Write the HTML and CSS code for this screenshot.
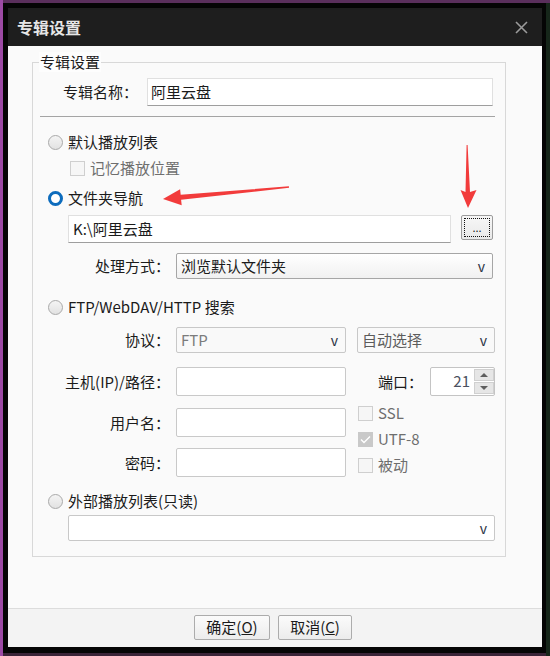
FILE: index.html
```html
<!DOCTYPE html>
<html lang="zh-CN">
<head>
  <meta charset="utf-8"/>
  <title>专辑设置</title>
  <link rel="stylesheet" href="styles.css">
</head>
<body>

<div class="dialog">
  <div class="titlebar">
    <span class="title">专辑设置</span>
    <svg class="close" width="13" height="13" viewBox="0 0 13 13">
      <path d="M1 1 L12 12 M12 1 L1 12" stroke="#9b9b9b" stroke-width="1.6" fill="none"/>
    </svg>
  </div>

  <div class="content">
    <div class="group">
      <span class="group-title">专辑设置</span>

      <div class="row row-name">
        <span class="lbl lbl-name">专辑名称：</span>
        <div class="edit edit-name">阿里云盘</div>
      </div>
      <div class="sep"></div>

      <div class="opt opt-first"><span class="radio"></span>默认播放列表</div>
      <div class="opt opt-sub"><span class="check"></span>记忆播放位置</div>
      <div class="opt opt-folder"><span class="radio on"></span>文件夹导航</div>

      <div class="row row-path">
        <div class="edit edit-path">K:\阿里云盘</div>
        <div class="btn-browse"><span>...</span></div>
      </div>

      <div class="row row-mode">
        <span class="lbl">处理方式：</span>
        <div class="combo combo-mode">浏览默认文件夹<span class="caret">v</span></div>
      </div>

      <div class="opt opt-ftp"><span class="radio"></span>FTP/WebDAV/HTTP 搜索</div>

      <div class="row row-proto">
        <span class="lbl">协议：</span>
        <div class="combo combo-proto off">FTP<span class="caret">v</span></div>
        <div class="combo combo-enc">自动选择<span class="caret">v</span></div>
      </div>

      <div class="lower">
        <div class="col-left">
          <div class="row row-field">
            <span class="lbl">主机(IP)/路径：</span>
            <div class="edit edit-small"></div>
          </div>
          <div class="row row-field row-user">
            <span class="lbl">用户名：</span>
            <div class="edit edit-small"></div>
          </div>
          <div class="row row-field row-pass">
            <span class="lbl">密码：</span>
            <div class="edit edit-small"></div>
          </div>
        </div>
        <div class="col-right">
          <div class="row row-port">
            <span class="lbl-port">端口：</span>
            <div class="spin">
              <span class="spin-val">21</span>
              <div class="spin-btns">
                <span class="spin-up"></span>
                <span class="spin-down"></span>
              </div>
            </div>
          </div>
          <div class="opt opt-flag first"><span class="check"></span>SSL</div>
          <div class="opt opt-flag"><span class="check checked"><svg width="11" height="9" viewBox="0 0 11 9"><path d="M1 4.5 L4 7.5 L10 1.5" stroke="#fff" stroke-width="1.4" fill="none"/></svg></span>UTF-8</div>
          <div class="opt opt-flag"><span class="check"></span>被动</div>
        </div>
      </div>

      <div class="opt opt-ext"><span class="radio"></span>外部播放列表(只读)</div>
      <div class="combo combo-ext"><span class="caret">v</span></div>
    </div>
  </div>

  <div class="footer">
    <div class="btn btn-ok">确定(<u>O</u>)</div>
    <div class="btn btn-cancel">取消(<u>C</u>)</div>
  </div>

  <!-- red hint arrows drawn on top of the dialog -->
  <svg class="arrows" width="534" height="639" viewBox="0 0 534 639">
    <polygon fill="#f23b3b" points="155,191 172.1,181.3 172.7,186.8 280.9,178.3 281.1,179.7 173.1,191.8 173.7,197.3"/>
    <polygon fill="#f23b3b" points="458.6,137 459.6,137 462,184 468.5,182 460,200 452.5,182 457.5,184"/>
  </svg>
</div>

</body>
</html>
```

FILE: styles.css
```css
body {
  margin: 0;
  height: 656px;
  padding: 8px;
  box-sizing: border-box;
  overflow: hidden;
  font-family: "Noto Sans CJK SC", "Noto Sans", sans-serif;
  font-size: 15px;
  color: #1b1b1b;
  background:
    linear-gradient(90deg, #9c4aa4 0, #9c4aa4 3px, transparent 3px),
    linear-gradient(180deg, #5a2f5c 0, #5a2f5c 3px, transparent 3px),
    linear-gradient(270deg, #16261a 0, #16261a 4px, transparent 4px),
    linear-gradient(0deg, #3a2438 0, #3a2438 3px, transparent 3px),
    #050505;
}
.dialog {
  position: relative;
  width: 534px;
  height: 639px;
  background: #fafafa;
}
.titlebar {
  height: 38px;
  background: #1e1e1e;
  display: flex;
  align-items: center;
  justify-content: space-between;
  padding: 0 14px 0 9px;
}
.title {
  color: #e6e6e6;
  font-size: 16px;
  font-weight: bold;
  line-height: 20px;
}
.content {
  height: 562px;
  padding-top: 16px;
  box-sizing: border-box;
}
.group {
  position: relative;
  margin-left: 24px;
  width: 474px;
  box-sizing: border-box;
  border: 1px solid #d8d8d8;
  padding-bottom: 15px;
}
.group-title {
  position: absolute;
  left: 6px;
  top: -11px;
  padding: 0 1px;
  background: #fdfdfd;
  line-height: 20px;
}
.row {
  display: flex;
  align-items: center;
}
.lbl {
  width: 137px;
  text-align: right;
  flex: none;
  line-height: 20px;
}
.row-name {
  margin-top: 15px;
  gap: 9px;
}
.lbl-name {
  width: 105px;
}
.edit {
  background: #fff;
  border: 1px solid #e0e0e0;
  border-bottom-color: #9e9e9e;
  box-sizing: border-box;
  height: 28px;
  line-height: 26px;
  padding-left: 3px;
  flex: none;
}
.edit-name {
  width: 346px;
}
.sep {
  margin: 10px 0 0 7px;
  width: 455px;
  height: 1px;
  background: #a4a4a4;
}
.opt {
  display: flex;
  align-items: center;
  gap: 5px;
  height: 20px;
  line-height: 20px;
  padding-left: 15px;
}
.opt-first {
  margin-top: 15px;
}
.opt-sub {
  margin-top: 6px;
  padding-left: 37px;
  color: #6e6e6e;
}
.opt-folder {
  margin-top: 10px;
}
.opt-ftp {
  margin-top: 18px;
}
.opt-ext {
  margin-top: 14px;
}
.radio {
  width: 15px;
  height: 15px;
  border-radius: 50%;
  box-sizing: border-box;
  border: 1px solid #a9a9a9;
  background: linear-gradient(#f4f4f4, #e2e2e2);
  flex: none;
}
.radio.on {
  border: 3px solid #0d6cbd;
  background: #fff;
}
.check {
  width: 15px;
  height: 15px;
  box-sizing: border-box;
  border: 1px solid #cfcfcf;
  background: #f6f6f6;
  flex: none;
  display: flex;
  align-items: center;
  justify-content: center;
}
.check.checked {
  background: #c9c9c9;
  border-color: #c9c9c9;
}
.row-path {
  margin-top: 7px;
  padding-left: 35px;
  gap: 10px;
  align-items: flex-start;
}
.edit-path {
  width: 383px;
  padding-left: 4px;
}
.btn-browse {
  width: 32px;
  height: 25px;
  box-sizing: border-box;
  border: 1px solid #9c9c9c;
  border-radius: 2px;
  background: linear-gradient(#f7f7f7, #e9e9e9);
  padding: 2px;
}
.btn-browse span {
  display: block;
  height: 100%;
  box-sizing: border-box;
  border: 1px dotted #111;
  text-align: center;
  font-size: 11px;
  line-height: 17px;
}
.combo {
  position: relative;
  height: 26px;
  box-sizing: border-box;
  border: 1px solid #c8c8c8;
  border-radius: 2px;
  background: #f9f9f9;
  line-height: 24px;
  padding-left: 4px;
  color: #5c5c5c;
  flex: none;
}
.caret {
  position: absolute;
  right: 7px;
  top: 0;
  color: #2c3446;
  font-size: 14px;
}
.row-mode {
  margin-top: 10px;
  gap: 6px;
}
.combo-mode {
  width: 317px;
  border-color: #a6a6a6;
  background: linear-gradient(#ffffff, #f1f1f1);
  color: #1b1b1b;
}
.row-proto {
  margin-top: 10px;
  gap: 6px;
}
.combo-proto {
  width: 170px;
  color: #7c7c7c;
}
.combo-enc {
  width: 138px;
  margin-left: 5px;
}
.lower {
  display: flex;
  margin-top: 14px;
}
.col-left {
  width: 313px;
}
.col-right {
  margin-left: 12px;
}
.row-field {
  gap: 6px;
}
.row-user {
  margin-top: 12px;
}
.row-pass {
  margin-top: 11px;
}
.edit-small {
  width: 170px;
  height: 29px;
  border-color: #c9c9c9;
  border-radius: 2px;
}
.row-port {
  height: 29px;
  gap: 7px;
}
.lbl-port {
  padding-left: 20px;
  line-height: 20px;
}
.spin {
  width: 65px;
  height: 29px;
  box-sizing: border-box;
  border: 1px solid #c4c4c4;
  border-radius: 2px;
  background: #fff;
  display: flex;
}
.spin-val {
  flex: 1;
  text-align: right;
  padding-right: 4px;
  line-height: 26px;
  color: #4b5060;
}
.spin-btns {
  width: 20px;
  display: flex;
  flex-direction: column;
  gap: 1px;
  padding: 1px 0;
}
.spin-up,
.spin-down {
  flex: 1;
  background: #e6e6e6;
  border: 1px solid #d0d0d0;
  position: relative;
}
.spin-up::after,
.spin-down::after {
  content: "";
  position: absolute;
  left: 5px;
  top: 3px;
  border-left: 4px solid transparent;
  border-right: 4px solid transparent;
}
.spin-up::after {
  border-bottom: 4px solid #5e5e5e;
}
.spin-down::after {
  border-top: 4px solid #5e5e5e;
}
.opt-flag {
  padding-left: 0;
  margin-top: 6px;
  color: #6e6e6e;
}
.opt-flag.first {
  margin-top: 7px;
}
.combo-ext {
  margin: 4px 0 0 35px;
  width: 427px;
  background: #fff;
}
.footer {
  height: 39px;
  box-sizing: border-box;
  border-top: 1px solid #dcdcdc;
  background: #f3f3f3;
  display: flex;
  justify-content: center;
  gap: 8px;
  padding: 6px 4px 0 0;
}
.btn {
  height: 25px;
  box-sizing: border-box;
  border: 1px solid #acacac;
  border-radius: 2px;
  background: linear-gradient(#fbfbfb, #ececec);
  text-align: center;
  line-height: 22px;
}
.btn-ok {
  width: 76px;
}
.btn-cancel {
  width: 74px;
}
.arrows {
  position: absolute;
  left: 0;
  top: 0;
  pointer-events: none;
}
```
